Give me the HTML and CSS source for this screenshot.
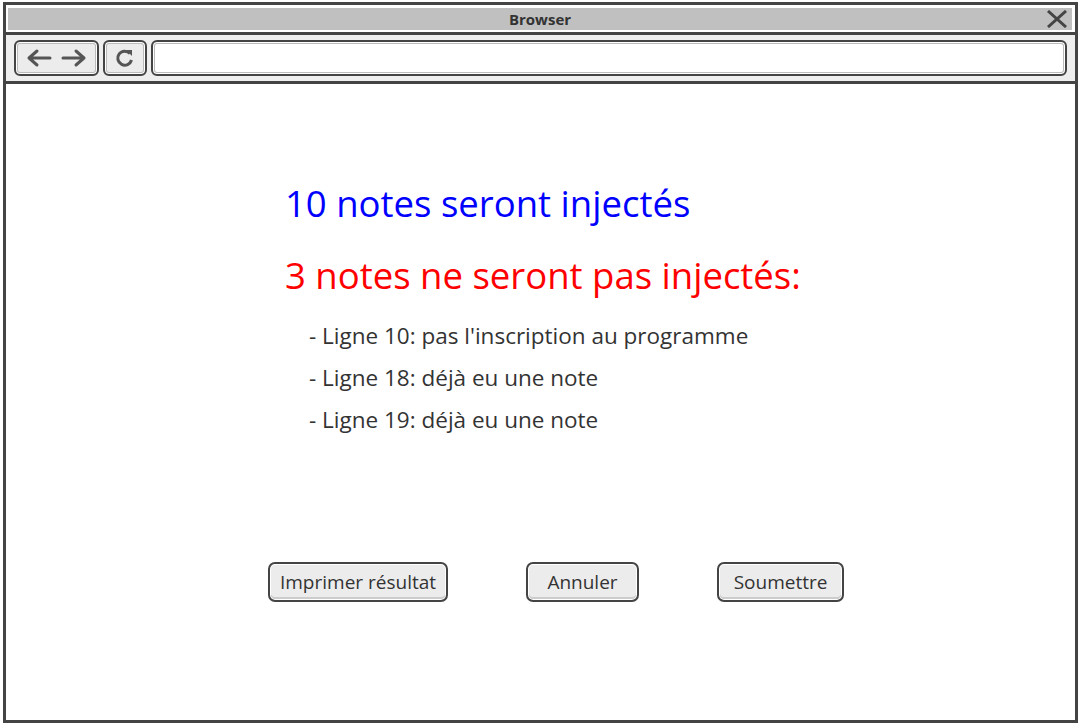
FILE: index.html
```html
<!DOCTYPE html>
<html lang="fr">
<head>
<meta charset="utf-8">
<title>Browser</title>
<link rel="stylesheet" href="styles.css">
</head>
<body>
<div class="frame">
  <div class="titlebar">
    <div class="titlebar-inner">
      <span class="title">Browser</span>
      <svg class="close" width="22" height="18" viewBox="0 0 22 18"><path d="M2 1 L20 17 M20 1 L2 17" stroke="#444" stroke-width="3" fill="none"/></svg>
    </div>
  </div>
  <div class="toolbar">
    <div class="tbtn nav">
      <svg width="62" height="20" viewBox="0 0 62 20"><path d="M3 10 H24 M11 3 L3 10 L11 17" stroke="#555" stroke-width="3" fill="none" stroke-linecap="round" stroke-linejoin="round"/><path d="M37 10 H58 M50 3 L58 10 L50 17" stroke="#555" stroke-width="3" fill="none" stroke-linecap="round" stroke-linejoin="round"/></svg>
    </div>
    <div class="tbtn reload">
      <svg width="22" height="22" viewBox="0 0 22 22"><path d="M16 6.5 A7 7 0 1 0 17.5 13" stroke="#555" stroke-width="3" fill="none"/><path d="M12 3 L18 3 L18 9 Z" fill="#555"/></svg>
    </div>
    <div class="address"></div>
  </div>
  <div class="content">
    <div class="messages">
      <h1 class="ok">10 notes seront injectés</h1>
      <h1 class="ko">3 notes ne seront pas injectés:</h1>
      <ul class="errors">
        <li>- Ligne 10: pas l'inscription au programme</li>
        <li>- Ligne 18: déjà eu une note</li>
        <li>- Ligne 19: déjà eu une note</li>
      </ul>
    </div>
    <div class="actions">
      <button class="btn btn-print">Imprimer résultat</button>
      <button class="btn btn-cancel">Annuler</button>
      <button class="btn btn-submit">Soumettre</button>
    </div>
  </div>
</div>
</body>
</html>
```

FILE: styles.css
```css
* { box-sizing: border-box; }
html, body { margin: 0; padding: 0; background: #fff; }
body { font-family: "Open Sans", "DejaVu Sans", sans-serif; color: #333; }

.frame {
  margin: 2px 0 0 3px;
  width: 1075px;
  height: 721px;
  border: 3px solid #444;
  display: flex;
  flex-direction: column;
  background: #fff;
}

.titlebar {
  padding: 3px 3px 2px 2px;
  border-bottom: 3px solid #444;
  background: #fff;
}
.titlebar-inner {
  height: 22px;
  background: #c0c0c0;
  display: flex;
  align-items: center;
  justify-content: center;
  position: relative;
}
.title {
  font-size: 15px;
  font-weight: 700;
  color: #333;
}
.close {
  position: absolute;
  right: 4px;
  top: 2px;
}

.toolbar {
  height: 49px;
  background: #eeeeee;
  border-bottom: 3px solid #444;
  display: flex;
  align-items: center;
  padding: 0 8px 0 8px;
  gap: 4px;
}
.tbtn, .address {
  height: 36px;
  border: 2px solid #444;
  border-radius: 6px;
  box-shadow: inset 0 0 0 1px #fff, inset 0 0 0 2px #bbb;
  background: #ececec;
  display: flex;
  align-items: center;
  justify-content: center;
}
.nav { width: 85px; }
.reload { width: 44px; }
.address { flex: 1; background: #fff; }

.content {
  flex: 1;
  display: flex;
  flex-direction: column;
}
.messages {
  margin-left: 279px;
  padding-top: 96px;
}
h1 {
  margin: 0;
  font-weight: 400;
  font-size: 36.5px;
  line-height: 46px;
}
.ok { color: #0000ff; }
.ko { color: #ff0000; margin-top: 26px; }

.errors {
  list-style: none;
  margin: 17px 0 0 24px;
  padding: 0;
}
.errors li {
  font-size: 22.5px;
  line-height: 42px;
  color: #333;
}

.actions {
  display: flex;
  gap: 78px;
  margin-left: 262px;
  margin-top: 121px;
}
.btn {
  height: 40px;
  padding: 0;
  font-family: inherit;
  font-size: 19px;
  color: #333;
  background: #ececec;
  border: 2px solid #444;
  border-radius: 7px;
  box-shadow: inset 0 0 0 1px #fff, inset 0 -2px 0 1px #ccc;
}
.btn-print { width: 180px; }
.btn-cancel { width: 113px; }
.btn-submit { width: 127px; }
```
